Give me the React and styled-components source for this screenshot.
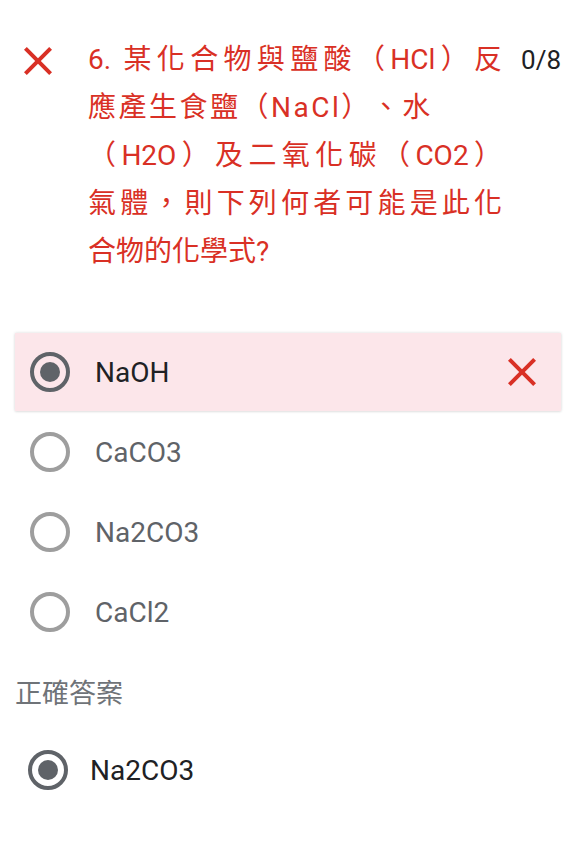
import React from "react";
import styled, { createGlobalStyle } from "styled-components";

const Global = createGlobalStyle`
  html, body { margin: 0; padding: 0; background: #ffffff; }
  body {
    font-family: Roboto, "Noto Sans CJK TC", "Noto Sans", sans-serif;
    -webkit-font-smoothing: antialiased;
  }
`;

const Page = styled.div`
  width: 576px;
  min-height: 843px;
  background: #ffffff;
  display: flex;
  flex-direction: column;
`;

const Header = styled.div`
  display: flex;
  align-items: flex-start;
  padding: 36px 15px 0 14px;
`;

const StatusIcon = styled.div`
  width: 48px;
  height: 48px;
  flex: none;
  display: flex;
  align-items: center;
  justify-content: center;
  margin-top: 1px;
  color: #d93025;
`;

const QuestionText = styled.div`
  width: 414px;
  margin-left: 26px;
  flex: none;
  color: #d93025;
  font-size: 28px;
  line-height: 48px;
  font-family: Roboto, "Noto Sans CJK TC", sans-serif;
  text-spacing-trim: space-all;
`;

const QuestionLine = styled.span`
  display: block;
  text-align: left;
  text-align-last: ${(p) => (p.$justify ? "justify" : "left")};
  text-justify: inter-character;
  white-space: ${(p) => (p.$justify ? "normal" : "nowrap")};
  letter-spacing: ${(p) => p.$spacing || 0}px;
`;

const Score = styled.div`
  margin-left: auto;
  color: #202124;
  font-size: 26px;
  line-height: 48px;
`;

const Options = styled.div`
  display: flex;
  flex-direction: column;
  margin-top: 56px;
  padding: 0 15px;
`;

const OptionRow = styled.div`
  display: flex;
  align-items: center;
  height: ${(p) => (p.$wrong ? "78px" : "80px")};
  margin-bottom: ${(p) => (p.$wrong ? "1px" : "0")};
  margin-top: ${(p) => (p.$wrong ? "1px" : "0")};
  padding: 0 15px;
  background: ${(p) => (p.$wrong ? "#fce6ea" : "transparent")};
  box-shadow: ${(p) =>
    p.$wrong ? "0 0 3px rgba(0,0,0,0.14), 0 1px 2px rgba(0,0,0,0.06)" : "none"};
`;

const Radio = styled.span`
  width: 40px;
  height: 40px;
  flex: none;
  box-sizing: border-box;
  border-radius: 50%;
  border: 4px solid ${(p) => (p.$checked ? "#5f6368" : "#9e9e9e")};
  display: flex;
  align-items: center;
  justify-content: center;
  &::after {
    content: "";
    width: 20px;
    height: 20px;
    border-radius: 50%;
    background: ${(p) => (p.$checked ? "#5f6368" : "transparent")};
  }
`;

const OptionLabel = styled.span`
  margin-left: ${(p) => p.$gap || 25}px;
  font-size: 28px;
  color: ${(p) => (p.$dark ? "#202124" : "#5f6368")};
  flex: 1;
`;

const MarkIcon = styled.span`
  width: 48px;
  height: 48px;
  display: flex;
  align-items: center;
  justify-content: center;
  color: #d93025;
`;

const SectionLabel = styled.div`
  margin-top: 22px;
  padding-left: 15px;
  font-size: 27px;
  line-height: 40px;
  color: #6f7378;
  font-family: Roboto, "Noto Sans CJK TC", sans-serif;
`;

const AnswerRow = styled.div`
  display: flex;
  align-items: center;
  height: 80px;
  margin-top: 16px;
  padding-left: 28px;
`;

const CloseIcon = ({ size = 48 }) => (
  <svg width={size} height={size} viewBox="0 0 24 24" fill="currentColor">
    <path d="M19 6.41L17.59 5 12 10.59 6.41 5 5 6.41 10.59 12 5 17.59 6.41 19 12 13.41 17.59 19 19 17.59 13.41 12z" />
  </svg>
);

const options = [
  { label: "NaOH", checked: true, wrong: true },
  { label: "CaCO3" },
  { label: "Na2CO3" },
  { label: "CaCl2" },
];

export default function App() {
  return (
    <Page>
      <Global />
      <Header>
        <StatusIcon>
          <CloseIcon />
        </StatusIcon>
        <QuestionText>
          <QuestionLine $justify>6. 某化合物與鹽酸（HCl）反</QuestionLine>
          <QuestionLine $spacing={2.5}>應產生食鹽（NaCl）、水</QuestionLine>
          <QuestionLine $justify>（H2O）及二氧化碳（CO2）</QuestionLine>
          <QuestionLine $justify>氣體，則下列何者可能是此化</QuestionLine>
          <QuestionLine>合物的化學式?</QuestionLine>
        </QuestionText>
        <Score>0/8</Score>
      </Header>
      <Options>
        {options.map((o) => (
          <OptionRow key={o.label} $wrong={o.wrong}>
            <Radio $checked={o.checked} />
            <OptionLabel $dark={o.checked}>{o.label}</OptionLabel>
            {o.wrong && (
              <MarkIcon>
                <CloseIcon />
              </MarkIcon>
            )}
          </OptionRow>
        ))}
      </Options>
      <SectionLabel>正確答案</SectionLabel>
      <AnswerRow>
        <Radio $checked />
        <OptionLabel $dark $gap={22}>Na2CO3</OptionLabel>
      </AnswerRow>
    </Page>
  );
}
